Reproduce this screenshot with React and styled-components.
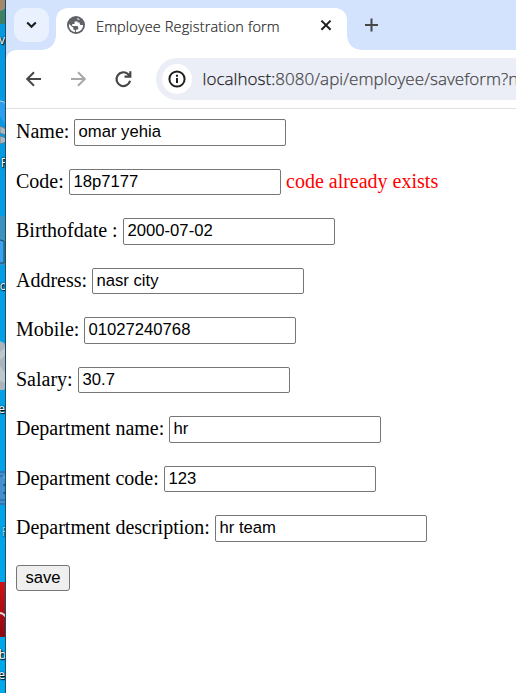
import React from "react";
import styled, { createGlobalStyle } from "styled-components";

const GlobalStyle = createGlobalStyle`
  * { box-sizing: border-box; }
  html, body { margin: 0; padding: 0; overflow: hidden; background: #fff; }
`;

const Screen = styled.div`
  display: flex;
  width: 516px;
  height: 693px;
  overflow: hidden;
`;

const Desktop = styled.div`
  position: relative;
  flex: 0 0 6px;
  height: 693px;
  overflow: hidden;
  background: #00a2e8;
  border-right: 1px solid #17506f;
  svg { display: block; }
`;

const IconLabel = styled.span`
  position: absolute;
  top: ${(p) => p.$top}px;
  right: ${(p) => p.$right || 0}px;
  font: 12px/16px "Open Sans", sans-serif;
  color: #fff;
  opacity: ${(p) => p.$opacity || 1};
  text-shadow: 1px 1px 1px #000, 0 0 2px #000;
`;

const Browser = styled.div`
  flex: 1;
  min-width: 0;
  display: flex;
  flex-direction: column;
  background: #fff;
`;

const TabStrip = styled.div`
  height: 50px;
  flex: none;
  display: flex;
  align-items: flex-start;
  padding: 8px 0 0 8px;
  background: #d3e3fd;
`;

const TabSearch = styled.button`
  width: 35px;
  height: 34px;
  padding: 0;
  border: 0;
  border-radius: 11px;
  background: #e9f1fe;
  svg { display: block; }
`;

const Tab = styled.div`
  position: relative;
  margin-left: 7px;
  width: 291px;
  height: 42px;
  display: flex;
  align-items: flex-start;
  padding: 7px 0 0 10px;
  background: #fff;
  border-radius: 12px 12px 0 0;
  &::before, &::after {
    content: "";
    position: absolute;
    bottom: 0;
    width: 14px;
    height: 14px;
  }
  &::before { left: -14px; background: radial-gradient(circle at 0 0, transparent 13.5px, #fff 14px); }
  &::after { right: -14px; background: radial-gradient(circle at 100% 0, transparent 13.5px, #fff 14px); }
`;

const TabTitle = styled.span`
  margin-left: 10px;
  width: 214px;
  font: 300 14.5px/24px "Open Sans", sans-serif;
  letter-spacing: 0.14px;
  color: #1f1f1f;
  white-space: nowrap;
  -webkit-text-stroke: 0.2px #1f1f1f;
`;

const CloseButton = styled.button`
  width: 20px;
  height: 20px;
  margin-left: 6px;
  padding: 0;
  border: 0;
  background: none;
  svg { display: block; }
`;

const NewTab = styled(CloseButton)`
  margin: 7px 0 0 14px;
`;

const Toolbar = styled.div`
  flex: none;
  height: 59px;
  display: flex;
  padding: 8px 0 0 16px;
  background: #fff;
  border-bottom: 1px solid #dfe1e5;
`;

const NavButton = styled.button`
  width: 24px;
  height: 24px;
  margin: 9px 20.5px 0 0;
  padding: 0;
  border: 0;
  background: none;
  color: ${(p) => (p.$dim ? "#a8a8a8" : "#474747")};
  svg { display: block; }
`;

const StripCorner = styled.div`
  flex: none;
  height: 59px;
  background: #d3e3fd;
  ${Toolbar} { border-radius: 10px 0 0 0; }
`;

const AddressBar = styled.div`
  flex: 1;
  min-width: 0;
  height: 42px;
  display: flex;
  align-items: center;
  padding-left: 6px;
  background: #ebeef7;
  border-radius: 21px 0 0 21px;
  overflow: hidden;
`;

const SiteInfo = styled.span`
  flex: none;
  width: 30px;
  height: 30px;
  border-radius: 50%;
  background: #fff;
  svg { display: block; }
`;

const Url = styled.span`
  margin-left: 11px;
  font: 300 17px/30px "Open Sans", sans-serif;
  letter-spacing: 0.04px;
  white-space: nowrap;
  color: #474747;
  -webkit-text-stroke: 0.25px currentColor;
  b { font-weight: 300; color: #1f1f1f; }
`;

const Form = styled.form`
  padding: 10px 0 0 10px;
`;

const Label = styled.label`
  flex: none;
  width: ${(p) => p.$width}px;
`;

const Field = styled.input`
  flex: none;
  width: 212px;
  height: 27px;
  padding: 1px 4px 2px 3.5px;
  border: 1px solid #767676;
  border-radius: 2px;
  background: #fff;
  color: #000;
  outline: 0;
  font: 16.67px "Liberation Sans", sans-serif;
`;

const Row = styled.div`
  height: 50px;
  display: flex;
  align-items: flex-start;
  font: 20px/24px "Liberation Serif", serif;
  color: #000;
  white-space: nowrap;
  &:nth-child(even) { height: 49px; }
  &:nth-child(even) ${Field} { height: 26px; padding-bottom: 1px; }
`;

const ErrorText = styled.span`
  margin-left: 5px;
  color: #f00;
`;

const SaveButton = styled.button`
  display: block;
  width: 54px;
  height: 26px;
  padding: 0 0 1px;
  border: 1px solid #767676;
  border-radius: 3px;
  background: #efefef;
  color: #000;
  font: 16.67px "Liberation Sans", sans-serif;
`;

const fields = [
  { label: "Name:", value: "omar yehia", width: 58 },
  { label: "Code:", value: "18p7177", width: 53, error: "code already exists" },
  { label: "Birthofdate :", value: "2000-07-02", width: 107 },
  { label: "Address:", value: "nasr city", width: 76 },
  { label: "Mobile:", value: "01027240768", width: 68 },
  { label: "Salary:", value: "30.7", width: 62 },
  { label: "Department name:", value: "hr", width: 153 },
  { label: "Department code:", value: "123", width: 148 },
  { label: "Department description:", value: "hr team", width: 199 },
];

function DesktopEdge() {
  return (
    <Desktop>
      <svg width="6" height="693" viewBox="0 0 6 693">
        <defs>
          <linearGradient id="sky" x1="0" y1="0" x2="0" y2="1">
            <stop offset="0" stopColor="#0797df" />
            <stop offset="1" stopColor="#00a8ec" />
          </linearGradient>
          <linearGradient id="red" x1="0" y1="0" x2="0" y2="1">
            <stop offset="0" stopColor="#d01216" />
            <stop offset="1" stopColor="#8f090d" />
          </linearGradient>
        </defs>
        <rect width="6" height="693" fill="url(#sky)" />
        <path d="M0 0h6v7q-2 4-6 4z" fill="#a5876c" />
        <path d="M0 11q4 0 6-3v16H0z" fill="#3f8063" />
        <path d="M0 101q4 0 6 3v22l-6-10z" fill="#2d9df0" />
        <path d="M0 101q4 0 6 3" fill="none" stroke="#c1d2dc" />
        <path d="M0 126l6 3v6l-6-2zM0 136l6 2v4l-6 2z" fill="#adb8bf" stroke="#65747f" strokeWidth=".7" />
        <rect y="216" width="6" height="49" fill="#3e91bc" />
        <path d="M0 240l4 1v22H0" fill="#39a3ee" stroke="#23475d" />
        <path d="M0 341l4 2 2 3v41l-2 3H0z" fill="#aeb4b9" />
        <path d="M0 352l6-5v8l-6 5zM0 366l6 8v9l-6-2z" fill="#c0c6ca" />
        <rect y="471" width="6" height="34" fill="#448fcc" />
        <path d="M0 472h6M0 476h6M0 500h6M0 504h6" stroke="#245f91" />
        <circle cx="4.5" cy="477" r="1.7" fill="#5ba6d9" />
        <circle cx="4.5" cy="485" r="1.2" fill="#17577e" />
        <circle cx="4.5" cy="493" r="1.2" fill="#17577e" />
        <rect y="582" width="6" height="55" fill="url(#red)" />
        <path d="M0 613q3 0 6 4" fill="none" stroke="#e9d2d2" strokeWidth="2" />
      </svg>
      <IconLabel $top={32}>ov</IconLabel>
      <IconLabel $top={155} $right={-3}>P</IconLabel>
      <IconLabel $top={278} $right={-2}>yo</IconLabel>
      <IconLabel $top={401}>e</IconLabel>
      <IconLabel $top={524} $right={-4} $opacity={0.5}>R</IconLabel>
      <IconLabel $top={647} $right={-1}>b</IconLabel>
      <IconLabel $top={667}>e</IconLabel>
    </Desktop>
  );
}

export default function App() {
  return (
    <Screen>
      <GlobalStyle />
      <DesktopEdge />
      <Browser>
        <TabStrip>
          <TabSearch aria-label="Search tabs">
            <svg width="35" height="34" viewBox="0 0 35 34" fill="none" stroke="#1f1f1f" strokeWidth="2.2">
              <path d="M13.2 14.5l4.3 4.3 4.3-4.3" />
            </svg>
          </TabSearch>
          <Tab>
            <svg width="20" height="20" viewBox="0 0 20 20">
              <circle cx="10" cy="10" r="9" fill="#5f6368" />
              <path
                fill="#fff"
                d="M10.5 2.9c.7.1 1.1.4 1.1 1.1v1.2c0 .8-.8 1.3-1.5 1.3H8.6v1.7c0 .6-.4.9-1 .9H6.2v1.8h4.7c.8 0 1.3.6 1.3 1.3v2.3h-1.1c-.7 0-1.1.5-1.1 1.1v1.5c3.9 0 7.1-3 7.1-7.1h-1.7c-1.1 0-1.8-.8-1.8-1.8v-.8h-2.2V5.9c0-.8.6-1.5 1.5-1.5h1.3c-.8-.7-1.7-1.1-2.7-1.5zM3 9.1c-.5 4.1 2.3 7.6 6.1 8v-1.8c-1 0-1.8-.8-1.8-1.7v-.9L3 9.1z"
              />
            </svg>
            <TabTitle>Employee Registration form</TabTitle>
            <CloseButton aria-label="Close tab">
              <svg width="20" height="20" viewBox="0 0 20 20" fill="none" stroke="#1f1f1f" strokeWidth="2">
                <path d="M5.4 5.6l9.2 9.2M14.6 5.6l-9.2 9.2" />
              </svg>
            </CloseButton>
          </Tab>
          <NewTab aria-label="New tab">
            <svg width="20" height="20" viewBox="0 0 20 20" fill="none" stroke="#474747" strokeWidth="2">
              <path d="M4 10h13M10.5 3.5v13" />
            </svg>
          </NewTab>
        </TabStrip>
        <StripCorner>
          <Toolbar>
            <NavButton aria-label="Back">
              <svg width="24" height="24" viewBox="0 0 24 24" fill="none" stroke="currentColor" strokeWidth="2">
                <path d="M19 12H5.5M12 5.2L5.2 12l6.8 6.8" />
              </svg>
            </NavButton>
            <NavButton aria-label="Forward" $dim>
              <svg width="24" height="24" viewBox="0 0 24 24" fill="none" stroke="currentColor" strokeWidth="2">
                <path d="M4 12h13.5M11 5.2l6.8 6.8-6.8 6.8" />
              </svg>
            </NavButton>
            <NavButton aria-label="Reload">
              <svg width="24" height="24" viewBox="0 0 24 24" fill="none" stroke="currentColor" strokeWidth="2.2">
                <path d="M19.1 13.8a6.9 6.9 0 1 1-1.9-6.6L19 9M19.3 4.2v5.5h-5.8" />
              </svg>
            </NavButton>
            <AddressBar>
              <SiteInfo>
                <svg width="30" height="30" viewBox="0 0 30 30" fill="none" stroke="#1f1f1f" strokeWidth="2">
                  <circle cx="15" cy="15" r="7.6" />
                  <path d="M15 14v5M15 10.8v1.9" />
                </svg>
              </SiteInfo>
              <Url>
                <b>localhost:</b>8080/api/employee/saveform?n
              </Url>
            </AddressBar>
          </Toolbar>
        </StripCorner>
        <Form onSubmit={(e) => e.preventDefault()}>
          {fields.map((f) => (
            <Row key={f.label}>
              <Label $width={f.width}>{f.label}</Label>
              <Field defaultValue={f.value} aria-label={f.label} />
              {f.error && <ErrorText>{f.error}</ErrorText>}
            </Row>
          ))}
          <SaveButton>save</SaveButton>
        </Form>
      </Browser>
    </Screen>
  );
}
